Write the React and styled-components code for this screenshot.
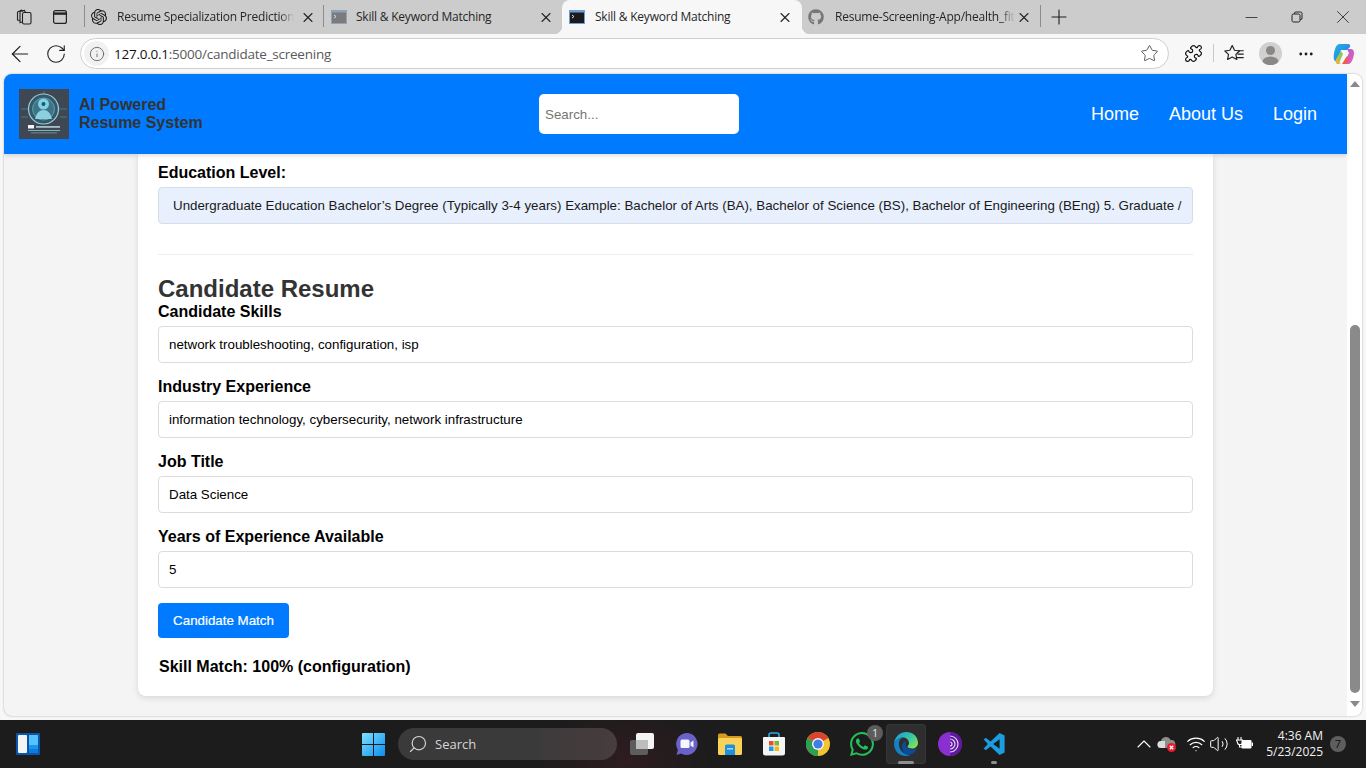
import React from 'react'
import styled, { createGlobalStyle } from 'styled-components'
import {
  ArrowLeft, RotateCw, Info, Star, X, Plus, Minus, Puzzle, MoreHorizontal,
  ChevronUp, Wifi, Volume2, Search
} from 'lucide-react'
import { FaGithub } from 'react-icons/fa'
import { SiOpenai } from 'react-icons/si'
import { BsWhatsapp } from 'react-icons/bs'

const UI_FONT = '"Open Sans", "Noto Sans", sans-serif'
const PAGE_FONT = '"Liberation Sans", Arial, sans-serif'

const GlobalStyle = createGlobalStyle`
  html, body { margin: 0; padding: 0; height: 100%; overflow: hidden; }
  * { box-sizing: border-box; }
  body { font-family: ${PAGE_FONT}; background: #f7f7f7; }
`

const Screen = styled.div`
  width: 1366px;
  height: 768px;
  display: flex;
  flex-direction: column;
  overflow: hidden;
  background: #f7f7f7;
`

/* tab strip */
const TabStrip = styled.div`
  height: 34px;
  flex: none;
  display: flex;
  align-items: stretch;
  padding-left: 6px;
  background: #cccccc;
  color: #1c1c1c;
`
const StripButton = styled.div`
  width: 36px;
  display: flex;
  align-items: center;
  justify-content: center;
  flex: none;
`
const TabDivider = styled.div`
  width: 1px;
  height: 22px;
  margin: 5px 0 0 ${p => p.$gap || 0}px;
  background: #8c8c8c;
  flex: none;
`
const Tab = styled.div`
  position: relative;
  width: ${p => p.$width}px;
  flex: none;
  display: flex;
  align-items: center;
  padding-left: ${p => p.$pad}px;
  border-radius: 8px 8px 0 0;
  background: ${p => (p.$active ? '#f7f7f7' : 'transparent')};
  ${p => p.$active && `
    &::before, &::after {
      content: '';
      position: absolute;
      bottom: 0;
      width: 8px;
      height: 8px;
    }
    &::before { left: -8px; background: radial-gradient(circle at 0 0, transparent 8px, #f7f7f7 8.5px); }
    &::after { right: -8px; background: radial-gradient(circle at 100% 0, transparent 8px, #f7f7f7 8.5px); }
  `}
`
const Favicon = styled.span`
  width: 16px;
  height: 16px;
  flex: none;
  display: flex;
  align-items: center;
  justify-content: center;
`
const TabTitle = styled.span`
  width: ${p => p.$width}px;
  margin-left: ${p => p.$gap}px;
  margin-top: -1px;
  flex: none;
  overflow: hidden;
  white-space: nowrap;
  font: 12px/16px ${UI_FONT};
  letter-spacing: -0.22px;
  color: #262626;
  ${p => p.$fade && `
    -webkit-mask-image: linear-gradient(to right, #000 calc(100% - 14px), transparent);
    mask-image: linear-gradient(to right, #000 calc(100% - 14px), transparent);
  `}
`
const TabClose = styled.span`
  width: 16px;
  height: 16px;
  flex: none;
  display: flex;
  align-items: center;
  justify-content: center;
  margin-left: ${p => p.$gap}px;
  color: #222;
`
const WindowControls = styled.div`
  margin-left: auto;
  display: flex;
`
const WindowButton = styled.div`
  width: 46px;
  display: flex;
  align-items: center;
  justify-content: center;
  color: #222;
`

/* address toolbar */
const Toolbar = styled.div`
  height: 40px;
  flex: none;
  display: flex;
  align-items: flex-start;
  padding: 4px 4px 0 2px;
  background: #f7f7f7;
  color: #1f1f1f;
`
const ToolButton = styled.div`
  width: 36px;
  height: 31px;
  flex: none;
  display: flex;
  align-items: center;
  justify-content: center;
  margin-left: ${p => p.$gap || 0}px;
`
const AddressBar = styled.div`
  flex: 1;
  height: 31px;
  margin: 0 6px;
  display: flex;
  align-items: center;
  padding: 0 9px 0 3px;
  background: #fff;
  border: 1px solid #cfcfcf;
  border-radius: 16px;
`
const SiteInfo = styled.div`
  width: 25px;
  height: 25px;
  flex: none;
  display: flex;
  align-items: center;
  justify-content: center;
  border-radius: 50%;
  background: #f1f1f1;
  color: #5f5f5f;
`
const Url = styled.div`
  margin-left: 5px;
  flex: 1;
  font: 13.5px/18px ${UI_FONT};
  letter-spacing: -0.24px;
  margin-top: 1px;
  color: #5a5a5a;
  span { color: #111; }
`
const ToolSep = styled.div`
  width: 1px;
  height: 18px;
  margin: 6px 2px 0 2px;
  background: #c9c9c9;
  flex: none;
`
const Avatar = styled.div`
  width: 23px;
  height: 23px;
  border-radius: 50%;
  background: #d2d0ce;
  overflow: hidden;
`

/* the page in the browser */
const PageWindow = styled.div`
  height: 642px;
  flex: none;
  margin: 0 4px;
  display: flex;
  border-radius: 8px;
  overflow: hidden;
  background: #f4f4f4;
  box-shadow: 0 0 2px rgba(0, 0, 0, 0.35);
`
const PageColumn = styled.div`
  flex: 1;
  min-width: 0;
  display: flex;
  flex-direction: column;
`
const NavBar = styled.header`
  height: 80px;
  flex: none;
  display: flex;
  align-items: center;
  padding: 0 30px 0 15px;
  background: #007bff;
  box-shadow: 0 2px 4px rgba(0, 0, 0, 0.12);
  position: relative;
`
const Brand = styled.div`
  width: 520px;
  flex: none;
  display: flex;
  align-items: center;
  gap: 10px;
`
const BrandName = styled.div`
  font-size: 16px;
  line-height: 18px;
  font-weight: bold;
  color: #333;
`
const SearchBox = styled.div`
  width: 200px;
  height: 40px;
  flex: none;
  display: flex;
  align-items: center;
  padding-left: 6px;
  background: #fff;
  border-radius: 5px;
  font-size: 13.333px;
  color: #757575;
`
const NavLinks = styled.nav`
  margin-left: auto;
  display: flex;
  gap: 30px;
`
const NavLink = styled.a`
  font-size: 18px;
  color: #fff;
  text-decoration: none;
`
const Main = styled.main`
  flex: 1;
  min-height: 0;
  overflow: hidden;
  padding: 0 134px;
`
const Card = styled.section`
  display: flex;
  flex-direction: column;
  padding: 9px 20px 19px;
  background: #fff;
  border-radius: 0 0 8px 8px;
  box-shadow: 0 2px 6px rgba(0, 0, 0, 0.12);
`
const FieldLabel = styled.label`
  display: block;
  font-size: 16px;
  line-height: 20px;
  font-weight: bold;
  color: #000;
  margin-bottom: 4px;
`
const Field = styled.div`
  height: 37px;
  display: flex;
  align-items: center;
  padding: 0 ${p => (p.$readonly ? 14 : 10)}px;
  border: 1px solid ${p => (p.$readonly ? '#d6dde8' : '#dcdcdc')};
  border-radius: 4px;
  background: ${p => (p.$readonly ? '#e8f0fe' : '#fff')};
  font-size: 13.333px;
  color: ${p => (p.$readonly ? '#1a1a1a' : '#000')};
  margin-bottom: 14px;
  white-space: nowrap;
  overflow: hidden;
`
const Divider = styled.hr`
  width: 100%;
  height: 1px;
  margin: 16px 0 20px;
  border: 0;
  background: #eeeeee;
`
const SectionTitle = styled.h2`
  margin: 0;
  font-size: 24px;
  line-height: 27px;
  font-weight: bold;
  color: #333;
`
const MatchButton = styled.button`
  align-self: flex-start;
  width: 131px;
  height: 35px;
  margin-top: 1px;
  border: 0;
  border-radius: 4px;
  background: #007bff;
  color: #fff;
  font: 13.333px ${PAGE_FONT};
  -webkit-text-stroke: 0.2px #fff;
`
const MatchResult = styled.div`
  margin-top: 19px;
  padding-left: 1px;
  font-size: 16px;
  line-height: 20px;
  font-weight: bold;
  color: #000;
`
const Scrollbar = styled.div`
  width: 15px;
  flex: none;
  display: flex;
  flex-direction: column;
  align-items: center;
  background: #fff;
  padding-top: 7px;
`
const ScrollArrow = styled.div`
  width: 0;
  height: 0;
  border-left: 5px solid transparent;
  border-right: 5px solid transparent;
  ${p => (p.$up ? 'border-bottom: 6px solid #8a8a8a;' : 'border-top: 6px solid #8a8a8a;')}
`
const ScrollThumb = styled.div`
  width: 10px;
  height: 368px;
  margin-top: 238px;
  margin-bottom: 8px;
  border-radius: 5px;
  background: #8a8a8a;
`

/* windows taskbar */
const Taskbar = styled.footer`
  height: 48px;
  flex: none;
  margin-top: 4px;
  display: flex;
  align-items: center;
  background: radial-gradient(ellipse 90px 60px at 625px 40px, #2e1c20, transparent), #1c1c1c;
  color: #fff;
`
const TaskLeft = styled.div`
  width: 351px;
  flex: none;
  padding-left: 16px;
  display: flex;
`
const TaskSlot = styled.div`
  position: relative;
  width: 44px;
  height: 40px;
  flex: none;
  display: flex;
  align-items: center;
  justify-content: center;
  border-radius: 4px;
  ${p => p.$active && `
    background: #2e2e2e;
    box-shadow: inset 0 0 0 1px #363636;
    width: 40px;
    margin: 0 2px;
  `}
  ${p => p.$running && `
    &::after {
      content: '';
      position: absolute;
      bottom: 0;
      left: 50%;
      height: 3px;
      width: ${p.$active ? 16 : 6}px;
      transform: translateX(-50%);
      border-radius: 2px;
      background: #8f8f8f;
    }
  `}
`
const CountBadge = styled.span`
  position: absolute;
  top: 1px;
  right: 1px;
  width: 16px;
  height: 16px;
  border-radius: 50%;
  background: #5c5c5c;
  color: #eee;
  font: 10px/16px ${UI_FONT};
  text-align: center;
`
const TaskSearch = styled.div`
  width: 219px;
  height: 32px;
  margin: 0 3px;
  flex: none;
  display: flex;
  align-items: center;
  gap: 7px;
  padding-left: 10px;
  border-radius: 16px;
  background: linear-gradient(to right, #3a3a3a 60%, #483c3e);
  font: 13px ${UI_FONT};
  color: #d6d6d6;
`
const Tray = styled.div`
  margin-left: auto;
  display: flex;
  align-items: center;
  padding-right: 20px;
`
const TrayIcon = styled.span`
  width: ${p => p.$width}px;
  flex: none;
  display: flex;
  justify-content: center;
  align-items: center;
  color: #fff;
  svg { flex: none; }
`
const Clock = styled.div`
  margin-left: 5px;
  width: 60px;
  text-align: right;
  font: 12px/16px ${UI_FONT};
  color: #f2f2f2;
`
const NotifyBadge = styled.span`
  width: 16px;
  height: 16px;
  margin-left: 7px;
  border-radius: 50%;
  background: #5e5e5e;
  color: #111;
  font: 11px/16px ${UI_FONT};
  text-align: center;
`

const WorkspacesIcon = () => (
  <svg width='18' height='18' viewBox='0 0 18 18' fill='none' stroke='#222' strokeWidth='1.1'>
    <rect x='7.500' y='4.500' width='8.500' height='11.500' rx='1.500' />
    <path d='M7.500 14 5 14.500V3.500L9.500 2.500l1 2' />
    <path d='M5 12.500 2.500 12V4l4-1.800 1.500.8' />
  </svg>
)

const TabListIcon = () => (
  <svg width='16' height='16' viewBox='0 0 16 16' fill='none' stroke='#222' strokeWidth='1.2'>
    <rect x='1.6' y='1.6' width='12.8' height='12.8' rx='2' />
    <path d='M1.6 4.6h12.8' strokeWidth='2.4' />
  </svg>
)

const ConsoleIcon = ({ dim }) => (
  <svg width='16' height='14' viewBox='0 0 16 14'>
    <rect width='16' height='14' fill={dim ? '#8fa2bb' : '#6f9bd8'} />
    <rect x='1' y='2.5' width='14' height='10.5' fill={dim ? '#7b7b7b' : '#1b1b1b'} />
    <path d='M3 5l2 1.5L3 8' fill='none' stroke='#ddd' strokeWidth='1' />
  </svg>
)

const RestoreIcon = () => (
  <svg width='12' height='12' viewBox='0 0 12 12' fill='none' stroke='#222' strokeWidth='1'>
    <rect x='1' y='3' width='8' height='8' rx='1.5' />
    <path d='M3.4 3V2.2A1.4 1.4 0 0 1 4.8 1H9.6A1.4 1.4 0 0 1 11 2.4V7A1.4 1.4 0 0 1 9.6 8.6H9' />
  </svg>
)

const FavoritesIcon = () => (
  <svg width='23' height='21' viewBox='0 0 20 18' fill='none' stroke='#1f1f1f' strokeWidth='1' strokeLinejoin='round'>
    <path d='M8 2l2 4.200 4.400.6-3.200 3 .8 4.400L8 12.100 4 14.200l.8-4.400-3.200-3L6 6.200z' />
    <path d='M13 6.600h5M12.600 9.600h5.400M12 12.600h6' />
  </svg>
)

const CopilotIcon = () => (
  <svg width='24' height='24' viewBox='0 0 24 24'>
    <defs>
      <linearGradient id='copA' x1='0' y1='0' x2='1' y2='1'>
        <stop offset='0' stopColor='#1fb6e0' />
        <stop offset='1' stopColor='#2f6fe8' />
      </linearGradient>
      <linearGradient id='copB' x1='0' y1='0' x2='1' y2='1'>
        <stop offset='0' stopColor='#a35bf0' />
        <stop offset='1' stopColor='#f0609a' />
      </linearGradient>
      <linearGradient id='copC' x1='0' y1='1' x2='1' y2='0'>
        <stop offset='0' stopColor='#f4b52c' />
        <stop offset='1' stopColor='#5fd07a' />
      </linearGradient>
    </defs>
    <path d='M8 2h8c2 0 2.500 1.500 2 3l-3 3H9L5.500 18c-.6 1.600-3 1.600-3.500-.5C1 13 3 5 5 3.200 6 2.300 7 2 8 2z' fill='url(#copA)' />
    <path d='M15 7h4c2 0 3 2 3 4 0 4-2 9-4 10.500-1 .8-2.500.5-4 .5h-3l3-5 3-6z' fill='url(#copB)' />
    <path d='M4 17l5-8 2 3-3 7c-.5 1.500-1 2.500 1 3H6c-2 0-3-2-2-5z' fill='url(#copC)' />
    <path d='M10 22l5-8 1 3-2 5z' fill='#f25c3d' />
  </svg>
)

const AiLogo = () => (
  <svg width='50' height='50' viewBox='0 0 50 50'>
    <rect width='50' height='50' fill='#3f4852' />
    <path d='M2 20h8M2 28h7M40 20h8M41 28h7M25 2v4' stroke='#4f8f9f' strokeWidth='.7' />
    <circle cx='24.500' cy='20' r='15' fill='#34596a' stroke='#9ccdd8' strokeWidth='1.200' />
    <circle cx='24.500' cy='20' r='11' fill='#3f7486' stroke='#6fb4c6' strokeWidth='.7' />
    <circle cx='24.500' cy='15' r='5.500' fill='#7fd2e6' />
    <circle cx='24.500' cy='15' r='2' fill='#24546a' />
    <path d='M16 30c1.500-6 4.500-9 8.500-9s7 3 8.500 9z' fill='#9adfee' opacity='.85' />
    <rect x='9' y='36' width='6' height='3.500' fill='#f0f6f8' />
    <rect x='17' y='37' width='24' height='1.800' fill='#a8c0c8' />
    <rect x='9' y='41' width='32' height='1' fill='#6fb8c6' />
    <rect x='12' y='43.500' width='26' height='.8' fill='#82979e' />
  </svg>
)

const WidgetsIcon = () => (
  <svg width='24' height='22' viewBox='0 0 24 22'>
    <rect width='24' height='22' rx='1' fill='#0b56a8' />
    <rect x='2' y='2' width='9' height='18' rx='1' fill='#f4f4f4' />
    <rect x='13' y='2' width='9' height='10' fill='#56c2fb' />
    <rect x='13' y='12' width='9' height='4' fill='#1b94ee' />
    <rect x='13' y='16' width='9' height='4' fill='#0a7be0' />
  </svg>
)

const StartIcon = () => (
  <svg width='23' height='23' viewBox='0 0 23 23'>
    <defs>
      <linearGradient id='startGrad' x1='0' y1='0' x2='1' y2='1'>
        <stop offset='0' stopColor='#7de3ff' />
        <stop offset='1' stopColor='#0a8dee' />
      </linearGradient>
    </defs>
    <path fill='url(#startGrad)' d='M0 1a1 1 0 0 1 1-1h10v11H0zM12 0h10a1 1 0 0 1 1 1v10H12zM0 12h11v11H1a1 1 0 0 1-1-1zM12 12h11v10a1 1 0 0 1-1 1H12z' />
  </svg>
)

const TaskViewIcon = () => (
  <svg width='24' height='24' viewBox='0 0 24 24'>
    <rect x='0' y='8' width='18' height='15' rx='2' fill='#5d5d5d' />
    <rect x='6' y='1' width='18' height='16' rx='2' fill='#f4f4f4' />
    <rect x='6' y='8' width='12' height='9' fill='#bdbdbd' />
  </svg>
)

const MeetIcon = () => (
  <svg width='24' height='24' viewBox='0 0 24 24'>
    <path d='M12.500 1a11 11 0 1 1-5.500 20.500L2.500 23l1.400-5A11 11 0 0 1 12.500 1z' fill='#6a62c9' />
    <rect x='6.500' y='7.500' width='9' height='8.500' rx='1.500' fill='#f5f5fb' />
    <path d='M16.500 10.500l3-2v7l-3-2z' fill='#f5f5fb' />
  </svg>
)

const FolderIcon = () => (
  <svg width='24' height='22' viewBox='0 0 24 22'>
    <path d='M0 2a1.500 1.500 0 0 1 1.500-1.500h6L10 3h12.500A1.500 1.500 0 0 1 24 4.500V8H0z' fill='#d89a1c' />
    <rect y='5' width='24' height='17' rx='1.500' fill='#f9d25c' />
    <path d='M7 13a1.500 1.500 0 0 1 1.500-1.500h7A1.500 1.500 0 0 1 17 13v9H7z' fill='#1f8fe0' />
    <rect x='9' y='15' width='6' height='1.600' fill='#9ed4f7' />
  </svg>
)

const StoreIcon = () => (
  <svg width='24' height='24' viewBox='0 0 24 24'>
    <path d='M7 5V3a2 2 0 0 1 2-2h6a2 2 0 0 1 2 2v2' fill='none' stroke='#2aa8e8' strokeWidth='1.600' />
    <path d='M1 6a1 1 0 0 1 1-1h20a1 1 0 0 1 1 1v15a2.500 2.500 0 0 1-2.500 2.500h-17A2.500 2.500 0 0 1 1 21z' fill='#f5f5f5' />
    <rect x='7' y='9' width='4.500' height='4.500' fill='#e8502a' />
    <rect x='12.500' y='9' width='4.500' height='4.500' fill='#7cb82a' />
    <rect x='7' y='14.500' width='4.500' height='4.500' fill='#1d9be8' />
    <rect x='12.500' y='14.500' width='4.500' height='4.500' fill='#f7b61c' />
  </svg>
)

const ChromeIcon = () => (
  <svg width='24' height='24' viewBox='0 0 24 24'>
    <circle cx='12' cy='12' r='12' fill='#f2c530' />
    <path d='M12 12 1.600 6A12 12 0 0 1 22.400 6z' fill='#d9432f' />
    <path d='M12 12 1.600 6A12 12 0 0 0 12 24z' fill='#2e9e52' />
    <circle cx='12' cy='12' r='6' fill='#f4f4f4' />
    <circle cx='12' cy='12' r='4.600' fill='#3f7fe6' />
  </svg>
)

const EdgeIcon = () => (
  <svg width='24' height='24' viewBox='0 0 24 24'>
    <defs>
      <linearGradient id='edgeTop' x1='0' y1='0' x2='1' y2='.7'>
        <stop offset='0' stopColor='#1a9bd8' />
        <stop offset='.6' stopColor='#36c5a8' />
        <stop offset='1' stopColor='#7fe05a' />
      </linearGradient>
    </defs>
    <path d='M12 0c7 0 12 4.500 12 11 0 3.500-3 5.500-6 5.500-2.500 0-4.500-.8-4.500-2 0-.8 1.500-1.300 1.500-3.500C15 8 12.500 5.500 9 5.500 5 5.500 1.500 8 0 12 .5 5 5.500 0 12 0z' fill='url(#edgeTop)' />
    <path d='M0 12c1-4 4.500-6.500 8.500-6.500C5.500 7 4.500 10 5 13.500c.6 5 5 9.500 11 9.500a12 12 0 0 1-4 1C5 24 0 18.500 0 12z' fill='#1380c8' />
    <path d='M8 14c0-2.500 2-4.500 4-4.500-1 2.500 0 6 3.500 7.500 2.500 1 5.500.5 7.500-1-1.500 4-5 7-9 7-3.500 0-6-4.500-6-9z' fill='#0b4c9a' />
  </svg>
)

const TorIcon = () => (
  <svg width='24' height='24' viewBox='0 0 24 24' fill='none'>
    <circle cx='12' cy='12' r='12' fill='#8a2fd0' />
    <path d='M12 0a12 12 0 0 1 0 24z' fill='#5d1a9c' />
    <path d='M12 4a8 8 0 0 1 0 16M12 7a5 5 0 0 1 0 10M12 10a2 2 0 0 1 0 4' stroke='#e8d2fa' strokeWidth='1.200' />
  </svg>
)

const VsCodeIcon = () => (
  <svg width='24' height='24' viewBox='0 0 24 24'>
    <path
      fillRule='evenodd'
      fill='#1b9de2'
      d='M17.600 1 8.600 9.400 4 6 1.500 7.200 5.800 12 1.500 16.800 4 18l4.600-3.400L17.600 23l5-2.400V3.400zM17.600 7.200v9.600L11.200 12z'
    />
  </svg>
)

const OneDriveIcon = () => (
  <svg width='20' height='18' viewBox='0 0 20 18'>
    <path d='M4 13a3.500 3.500 0 0 1 0-7 5 5 0 0 1 9.500-1A4 4 0 0 1 15 13z' fill='#8e8e8e' />
    <path d='M4 13a3.500 3.500 0 0 1 0-7h4v7z' fill='#dcdcdc' />
    <circle cx='14.500' cy='12.500' r='4.500' fill='#e81c2d' />
    <path d='M12.800 10.800l3.400 3.400M16.200 10.800l-3.400 3.400' stroke='#fff' strokeWidth='1.300' />
  </svg>
)

const BatteryIcon = () => (
  <svg width='17' height='14' viewBox='0 0 17 14' fill='none'>
    <path d='M2 0v3M5 0v3M.5 3h6v2.500a2 2 0 0 1-2 2h-1a2 2 0 0 1-2-2zM3.500 7.500V10H6' stroke='#fff' strokeWidth='1.100' />
    <rect x='5.500' y='3' width='10' height='8.500' rx='1' fill='#fff' />
    <rect x='15.700' y='5.500' width='1.300' height='3.500' fill='#fff' />
  </svg>
)

const TABS = [
  { title: 'Resume Specialization Prediction', width: 238, pad: 6, iconGap: 10, titleWidth: 177, closeGap: 6, fade: true, icon: <SiOpenai size={16} /> },
  { title: 'Skill & Keyword Matching', width: 238, pad: 7, iconGap: 9, titleWidth: 174, closeGap: 8, icon: <ConsoleIcon dim /> },
  { title: 'Skill & Keyword Matching', width: 240, pad: 7, iconGap: 10, titleWidth: 174, closeGap: 8, active: true, icon: <ConsoleIcon /> },
  { title: 'Resume-Screening-App/health_fit', width: 238, pad: 6, iconGap: 11, titleWidth: 180, closeGap: 1, fade: true, icon: <FaGithub size={16} color='#777' /> }
]

const FIELDS = [
  { label: 'Industry Experience', value: 'information technology, cybersecurity, network infrastructure' },
  { label: 'Job Title', value: 'Data Science' },
  { label: 'Years of Experience Available', value: '5' }
]

const Chrome = () => (
  <>
    <TabStrip>
      <StripButton><WorkspacesIcon /></StripButton>
      <StripButton><TabListIcon /></StripButton>
      <TabDivider $gap={6} />
      {TABS.map((tab, i) => (
        <React.Fragment key={i}>
          <Tab $width={tab.width} $pad={tab.pad} $active={tab.active}>
            <Favicon>{tab.icon}</Favicon>
            <TabTitle $width={tab.titleWidth} $gap={tab.iconGap} $fade={tab.fade}>{tab.title}</TabTitle>
            <TabClose $gap={tab.closeGap}><X size={17} strokeWidth={1.6} /></TabClose>
          </Tab>
          {i === 0 && <TabDivider />}
        </React.Fragment>
      ))}
      <TabDivider />
      <StripButton><Plus size={24} strokeWidth={1.1} /></StripButton>
      <WindowControls>
        <WindowButton><Minus size={19} strokeWidth={1} /></WindowButton>
        <WindowButton><RestoreIcon /></WindowButton>
        <WindowButton><X size={22} strokeWidth={0.9} /></WindowButton>
      </WindowControls>
    </TabStrip>
    <Toolbar>
      <ToolButton><ArrowLeft size={26} strokeWidth={1.1} /></ToolButton>
      <ToolButton><RotateCw size={22} strokeWidth={1.2} /></ToolButton>
      <AddressBar>
        <SiteInfo><Info size={16} strokeWidth={1.3} /></SiteInfo>
        <Url><span>127.0.0.1</span>:5000/candidate_screening</Url>
        <Star size={19} strokeWidth={1.1} color='#444' />
      </AddressBar>
      <ToolButton><Puzzle size={19} strokeWidth={1.5} color='#111' /></ToolButton>
      <ToolSep />
      <ToolButton><FavoritesIcon /></ToolButton>
      <ToolButton>
        <Avatar>
          <svg width='23' height='23' viewBox='0 0 23 23'>
            <circle cx='11.500' cy='8.500' r='4.500' fill='#8a8886' />
            <ellipse cx='11.500' cy='20' rx='8' ry='5.500' fill='#8a8886' />
          </svg>
        </Avatar>
      </ToolButton>
      <ToolButton><MoreHorizontal size={18} strokeWidth={1.8} /></ToolButton>
      <ToolButton $gap={2}><CopilotIcon /></ToolButton>
    </Toolbar>
  </>
)

const Page = () => (
  <PageWindow>
    <PageColumn>
      <NavBar>
        <Brand>
          <AiLogo />
          <BrandName>AI Powered<br />Resume System</BrandName>
        </Brand>
        <SearchBox>Search...</SearchBox>
        <NavLinks>
          <NavLink>Home</NavLink>
          <NavLink>About Us</NavLink>
          <NavLink>Login</NavLink>
        </NavLinks>
      </NavBar>
      <Main>
        <Card>
          <FieldLabel>Education Level:</FieldLabel>
          <Field $readonly>
            Undergraduate Education Bachelor’s Degree (Typically 3-4 years) Example: Bachelor of Arts (BA), Bachelor of Science (BS), Bachelor of Engineering (BEng) 5. Graduate /
          </Field>
          <Divider />
          <SectionTitle>Candidate Resume</SectionTitle>
          <FieldLabel>Candidate Skills</FieldLabel>
          <Field>network troubleshooting, configuration, isp</Field>
          {FIELDS.map(field => (
            <React.Fragment key={field.label}>
              <FieldLabel>{field.label}</FieldLabel>
              <Field>{field.value}</Field>
            </React.Fragment>
          ))}
          <MatchButton>Candidate Match</MatchButton>
          <MatchResult>Skill Match: 100% (configuration)</MatchResult>
        </Card>
      </Main>
    </PageColumn>
    <Scrollbar>
      <ScrollArrow $up />
      <ScrollThumb />
      <ScrollArrow />
    </Scrollbar>
  </PageWindow>
)

const WindowsBar = () => (
  <Taskbar>
    <TaskLeft><WidgetsIcon /></TaskLeft>
    <TaskSlot><StartIcon /></TaskSlot>
    <TaskSearch>
      <Search size={20} strokeWidth={1.4} style={{ transform: 'scaleX(-1)' }} />
      Search
    </TaskSearch>
    <TaskSlot><TaskViewIcon /></TaskSlot>
    <TaskSlot><MeetIcon /></TaskSlot>
    <TaskSlot><FolderIcon /></TaskSlot>
    <TaskSlot><StoreIcon /></TaskSlot>
    <TaskSlot><ChromeIcon /></TaskSlot>
    <TaskSlot>
      <BsWhatsapp size={24} color='#25c05a' />
      <CountBadge>1</CountBadge>
    </TaskSlot>
    <TaskSlot $active $running><EdgeIcon /></TaskSlot>
    <TaskSlot><TorIcon /></TaskSlot>
    <TaskSlot $running><VsCodeIcon /></TaskSlot>
    <Tray>
      <TrayIcon $width={12}><ChevronUp size={24} strokeWidth={1.1} /></TrayIcon>
      <TrayIcon $width={34}><OneDriveIcon /></TrayIcon>
      <TrayIcon $width={24}><Wifi size={20} strokeWidth={1.4} /></TrayIcon>
      <TrayIcon $width={22}><Volume2 size={20} strokeWidth={1.2} /></TrayIcon>
      <TrayIcon $width={28}><BatteryIcon /></TrayIcon>
      <Clock>4:36 AM<br />5/23/2025</Clock>
      <NotifyBadge>7</NotifyBadge>
    </Tray>
  </Taskbar>
)

const App = () => (
  <Screen>
    <GlobalStyle />
    <Chrome />
    <Page />
    <WindowsBar />
  </Screen>
)

export default App
